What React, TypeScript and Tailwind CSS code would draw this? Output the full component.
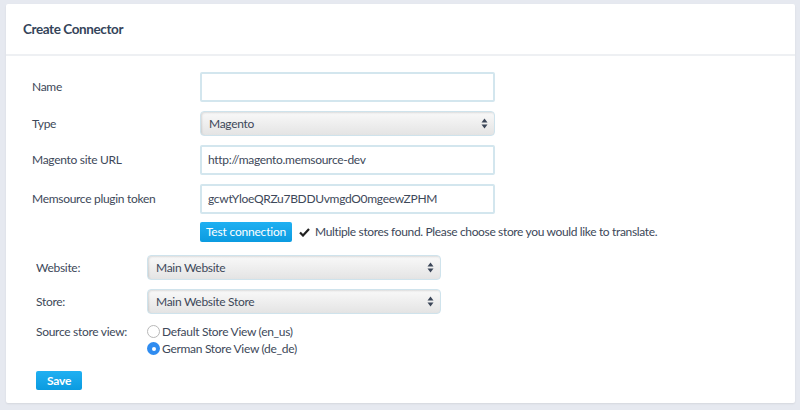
import React from 'react';

const font = { fontFamily: 'Lato, "Open Sans", sans-serif' };

const Arrows = () => (
  <svg width="7" height="11" viewBox="0 0 7 11" className="shrink-0">
    <path d="M3.5 0.5 L6.5 4.5 L0.5 4.5 Z" fill="#3b4658" />
    <path d="M3.5 10.5 L6.5 6.5 L0.5 6.5 Z" fill="#3b4658" />
  </svg>
);

const Select = ({ value, className }: { value: string; className: string }) => (
  <div
    className={`flex items-center justify-between rounded-[4px] border border-[#cfe3ec] bg-gradient-to-b from-[#f9f9f9] to-[#e4e4e4] pl-[8px] pr-[6px] text-[12px] tracking-[-0.3px] text-[#3d4859] shadow-[inset_1px_1px_2px_rgba(0,0,0,0.12)] ${className}`}
  >
    <span>{value}</span>
    <Arrows />
  </div>
);

const Input = ({ value }: { value?: string }) => (
  <div className="flex h-[30px] w-[295px] items-center rounded-[2px] border-2 border-[#d3e6ee] bg-white px-[6px] text-[12px] tracking-[-0.3px] text-[#3d4859]">
    {value}
  </div>
);

const Row = ({ label, children }: { label: string; children: React.ReactNode }) => (
  <div className="flex items-center">
    <div className="w-[168px] shrink-0 text-[12px] tracking-[-0.3px] text-[#3d4859]">{label}</div>
    {children}
  </div>
);

const Radio = ({ checked, label }: { checked?: boolean; label: string }) => (
  <div className="flex h-[17px] items-center gap-[2px]">
    {checked ? (
      <div className="flex h-[13px] w-[13px] items-center justify-center rounded-full bg-[#2f8cf0]">
        <div className="h-[4px] w-[4px] rounded-full bg-white" />
      </div>
    ) : (
      <div className="h-[13px] w-[13px] rounded-full border border-[#b8b8b8] bg-white" />
    )}
    <span className="text-[12px] tracking-[-0.3px] text-[#3d4859]">{label}</span>
  </div>
);

export default function App() {
  return (
    <div className="h-[410px] w-[800px] bg-[#e6e9f0] pl-[6px] pr-[5px] pt-[4px]" style={font}>
      <div className="h-[399px] rounded-[2px] bg-white shadow-[0_1px_2px_rgba(0,0,0,0.08)]">
        <div className="flex h-[52px] items-center border-b-2 border-[#eef0f3] pl-[17px] text-[13.5px] font-bold tracking-[-0.4px] text-[#34445a]">
          Create Connector
        </div>
        <div className="pl-[26px] pt-[16px]">
          <div className="flex flex-col">
            <Row label="Name">
              <Input />
            </Row>
            <div className="mt-[9px]">
              <Row label="Type">
                <Select value="Magento" className="h-[25px] w-[295px]" />
              </Row>
            </div>
            <div className="mt-[9px]">
              <Row label="Magento site URL">
                <Input value="http://magento.memsource-dev" />
              </Row>
            </div>
            <div className="mt-[9px]">
              <Row label="Memsource plugin token">
                <Input value="gcwtYloeQRZu7BDDUvmgdO0mgeewZPHM" />
              </Row>
            </div>
            <div className="ml-[168px] mt-[8px] flex items-center">
              <div className="flex h-[20px] w-[92px] items-center justify-center rounded-[2px] bg-gradient-to-b from-[#1fb0f2] to-[#0a9be0] text-[12px] tracking-[-0.2px] text-white">
                Test connection
              </div>
              <svg width="11" height="9" viewBox="0 0 11 9" className="ml-[7px]">
                <path d="M1 4.5 L4 7.5 L10 1" fill="none" stroke="#222" strokeWidth="2.2" />
              </svg>
              <span className="ml-[5px] text-[12px] tracking-[-0.35px] text-[#3d4859]">
                Multiple stores found. Please choose store you would like to translate.
              </span>
            </div>
          </div>
          <div className="ml-[4px] mt-[13px] flex flex-col">
            <div className="flex items-center">
              <div className="w-[111px] shrink-0 text-[12px] tracking-[-0.3px] text-[#3d4859]">Website:</div>
              <Select value="Main Website" className="h-[25px] w-[294px]" />
            </div>
            <div className="mt-[9px] flex items-center">
              <div className="w-[111px] shrink-0 text-[12px] tracking-[-0.3px] text-[#3d4859]">Store:</div>
              <Select value="Main Website Store" className="h-[25px] w-[294px]" />
            </div>
            <div className="mt-[9px] flex">
              <div className="w-[111px] shrink-0 text-[12px] leading-[17px] tracking-[-0.3px] text-[#3d4859]">Source store view:</div>
              <div className="flex flex-col">
                <Radio label="Default Store View (en_us)" />
                <Radio checked label="German Store View (de_de)" />
              </div>
            </div>
            <div className="mt-[14px] flex h-[19px] w-[46px] items-center justify-center rounded-[2px] bg-gradient-to-b from-[#1fb0f2] to-[#0a9be0] text-[12px] font-bold tracking-[-0.2px] text-white">
              Save
            </div>
          </div>
        </div>
      </div>
    </div>
  );
}
